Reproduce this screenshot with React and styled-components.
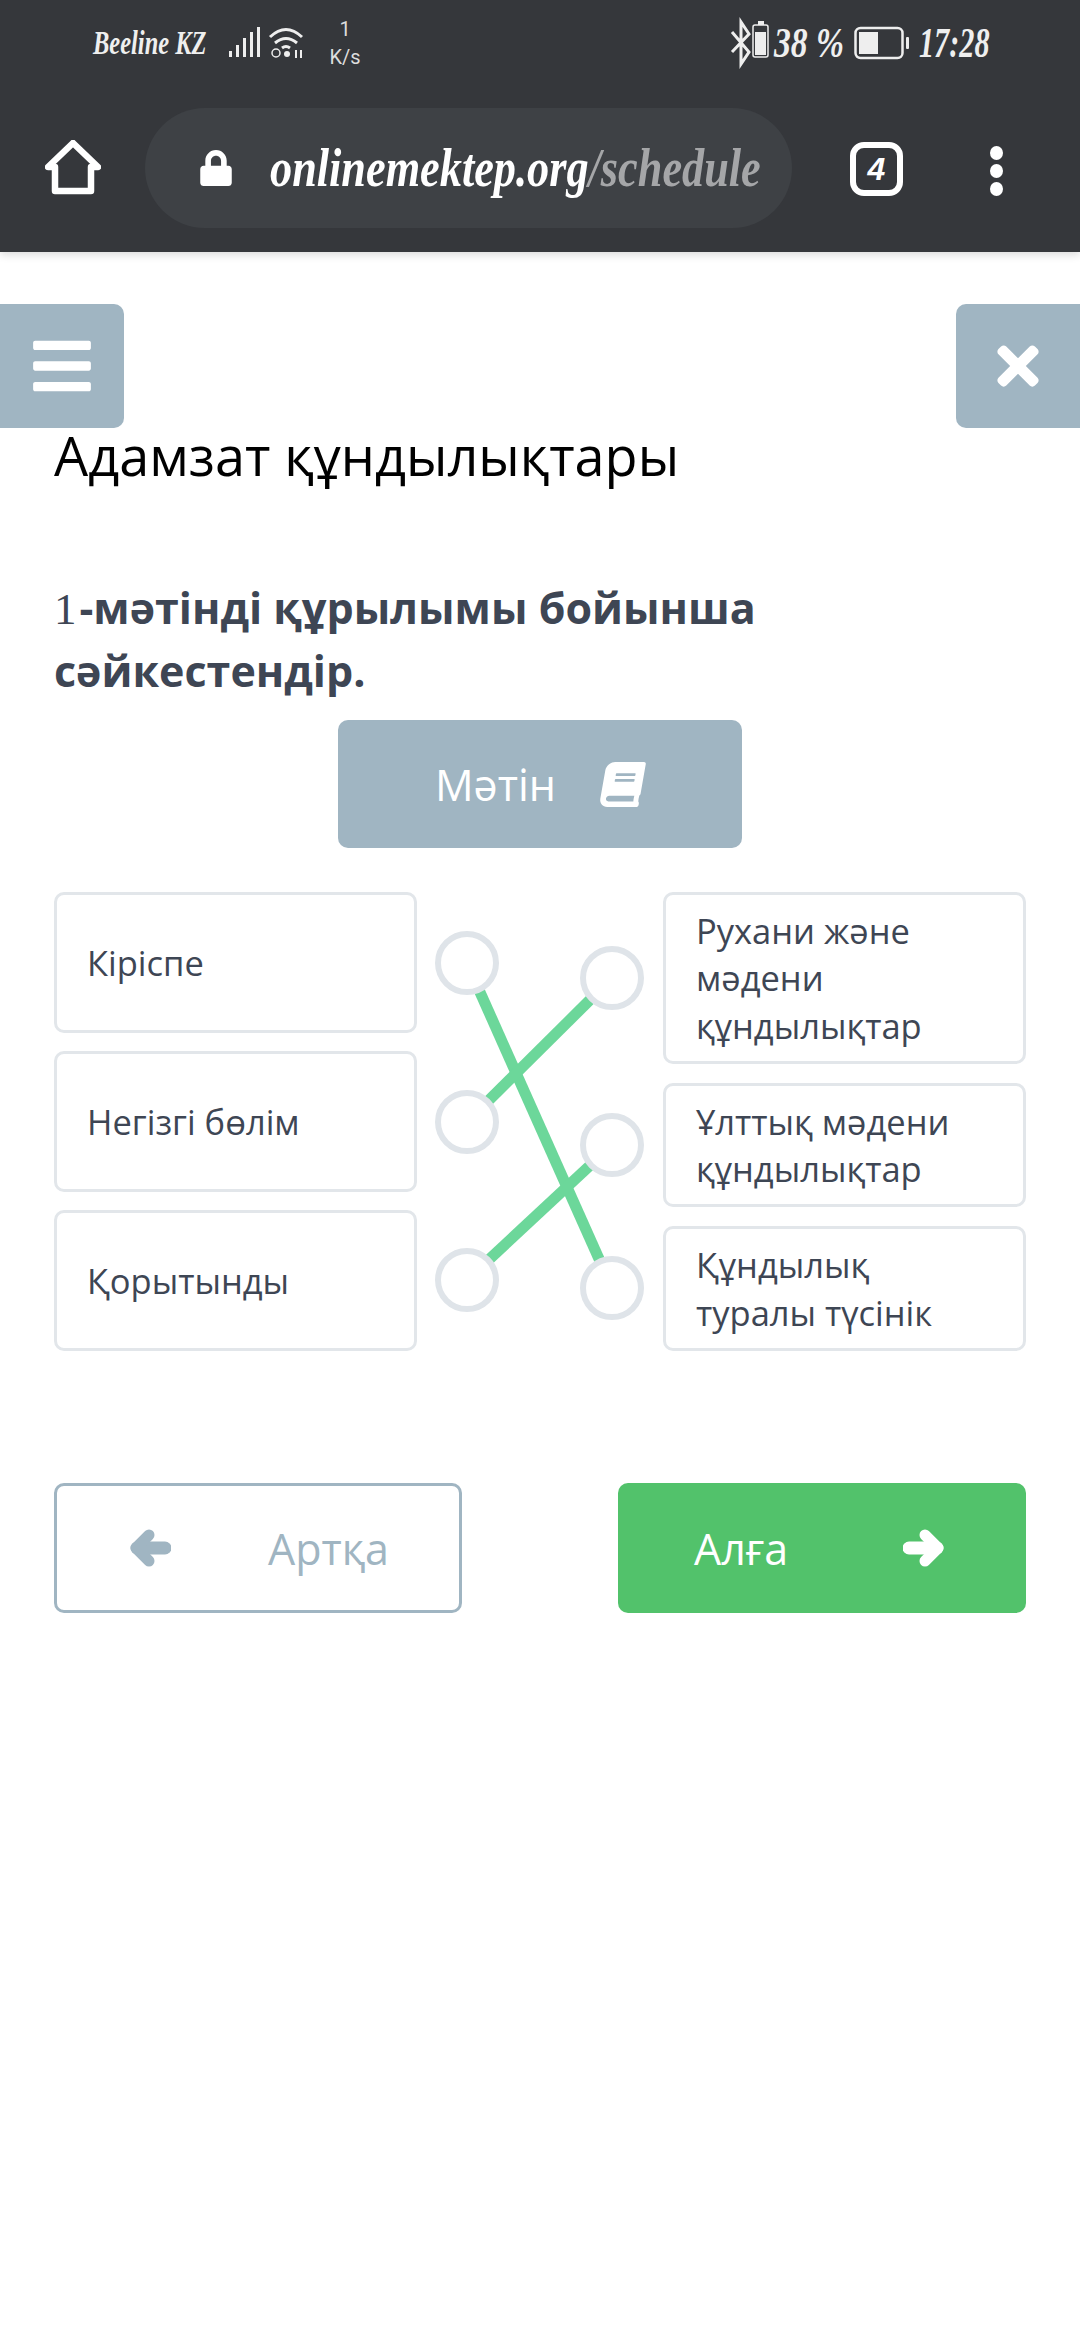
import React from "react";
import styled, { createGlobalStyle } from "styled-components";
import { FaBars, FaTimes, FaBook, FaLock } from "react-icons/fa";

const Global = createGlobalStyle`
  html, body { margin: 0; padding: 0; background: #fff; }
  * { box-sizing: border-box; }
`;
const Page = styled.div`
  width: 1080px; height: 2340px; overflow: hidden; background: #fff;
  font-family: "Open Sans", "Noto Sans", sans-serif; color: #3e4654;
`;
const Chrome = styled.header`
  height: 252px; background: #35373b; display: flex; flex-direction: column;
  box-shadow: 0 3px 8px rgba(0,0,0,.14);
`;
const StatusBar = styled.div`
  height: 108px; padding: 0 0 22px 93px; display: flex; align-items: center; color: #efefef;
`;
const Script = styled.span`
  font-family: "Liberation Serif", serif; font-style: italic; font-weight: 700;
  font-size: ${p => p.$size}px; display: inline-block; white-space: nowrap;
  transform: scaleX(${p => p.$sx}); transform-origin: left center; width: ${p => p.$w}px;
  margin-left: ${p => p.$ml || 0}px;
`;
const Speed = styled.div`
  width: 44px; margin-left: 5px; font: 400 20px/28px Roboto, sans-serif; text-align: center; color: #ddd;
`;
const Spacer = styled.div`width: ${p => p.$w}px; flex: none;`;
const StatusIcons = styled.svg`flex: none; display: block;`;
const UrlRow = styled.div`flex: 1; display: flex; align-items: flex-start;`;
const HomeSlot = styled.div`
  width: 145px; height: 120px; display: flex; align-items: center; justify-content: center;
`;
const UrlPill = styled.div`
  width: 647px; height: 120px; border-radius: 60px; background: #3e4145; display: flex; align-items: center;
  padding-left: 53px; color: #fff; gap: 36px;
`;
const Host = styled.span`
  font-family: "Liberation Serif", serif; font-style: italic; font-weight: 700; font-size: 54px; color: #fff;
  display: inline-block; white-space: nowrap; transform: scaleX(.82); transform-origin: left center; width: 490px;
`;
const Path = styled.span`color: #a5a6a8;`;
const TabSlot = styled.div`
  margin-left: 58px; width: 53px; height: 54px; margin-top: 34px; border: 6px solid #fff; border-radius: 14px;
  display: flex; align-items: center; justify-content: center; color: #fff;
  font: italic 700 32px/1 "Liberation Sans", sans-serif;
`;
const Kebab = styled.div`
  margin-left: 87px; margin-top: 38px; display: flex; flex-direction: column; gap: 4px;
`;
const Dot = styled.i`display: block; width: 13px; height: 14px; border-radius: 50%; background: #fff;`;

const Content = styled.main`padding-top: 52px;`;
const CornerRow = styled.div`display: flex; justify-content: space-between;`;
const CornerBtn = styled.div`
  width: 124px; height: 124px; background: #a0b5c2; color: #fff; display: flex; align-items: center; justify-content: center;
  border-radius: ${p => p.$side === "left" ? "0 10px 10px 0" : "10px 0 0 10px"};
  font-size: ${p => p.$fs}px;
`;
const Title = styled.h1`
  margin: -3px 0 0; padding: 0 54px; font-weight: 400; font-size: 54px; line-height: 60px; color: #000;
`;
const Question = styled.h2`
  margin: 92px 0 0; padding: 0 54px; font-size: 43px; line-height: 61px; font-weight: 700; color: #3e4654; width: 860px;
`;
const One = styled.span`font-family: "Liberation Serif", serif; font-weight: 400; font-size: 45px; margin-right: 3px;`;
const CenterRow = styled.div`display: flex; justify-content: center; margin-top: 19px;`;
const TextBtn = styled.div`
  width: 404px; height: 128px; border-radius: 10px; background: #a0b5c2; color: #fff; display: flex;
  align-items: center; justify-content: center; gap: 44px; font-size: 43px;
  svg { font-size: 45px; transform: skewX(-10deg); }
`;
const Match = styled.section`
  margin-top: 44px; padding: 0 54px; display: grid; grid-template-columns: 363px 246px 363px; align-items: stretch;
`;
const Col = styled.div`display: flex; flex-direction: column; gap: ${p => p.$gap}px;`;
const Card = styled.div`
  height: ${p => p.$h}px; border: 3px solid #e2e6ea; border-radius: 10px; background: #fff;
  display: flex; align-items: center; padding: 0 40px 0 30px; font-size: 34.5px; line-height: 47.5px; color: #3e4654;
`;
const Wires = styled.svg`display: block;`;
const Nav = styled.div`
  margin-top: 132px; padding: 0 54px; display: flex; justify-content: space-between;
`;
const NavBtn = styled.div`
  width: 408px; height: 130px; border-radius: 10px; display: flex; align-items: center; justify-content: space-between;
  font-size: 43px;
  padding: 0 ${p => p.$pr}px 0 ${p => p.$pl}px;
  background: ${p => p.$primary ? "#52c26b" : "#fff"};
  color: ${p => p.$primary ? "#fff" : "#a0b5c2"};
  border: ${p => p.$primary ? "none" : "3.5px solid #a0b5c2"};
`;

const HomeIcon = () => (
  <svg width="56" height="56" viewBox="0 0 56 56" fill="none" stroke="#fff" strokeWidth="6.5" strokeLinejoin="round">
    <path d="M3 27 L28 3 L53 27 H46 V51 H10 V27 Z" />
  </svg>
);

const Arrow = ({ color, flip }) => (
  <svg width="44" height="38" viewBox="0 0 44 38" fill="none" stroke={color} strokeLinecap="round" strokeLinejoin="round"
    style={flip ? { transform: "scaleX(-1)" } : undefined}>
    <path d="M38 19 H10" strokeWidth="13" />
    <path d="M22 6 L9 19 L22 32" strokeWidth="11" />
  </svg>
);

const LeftStatus = () => (
  <StatusIcons width="90" height="36" viewBox="0 0 90 36">
    <g fill="#eee">
      <rect x="1" y="26" width="3" height="6" /><rect x="8" y="20" width="3" height="12" />
      <rect x="15" y="13" width="3" height="19" /><rect x="22" y="7" width="3" height="25" /><rect x="29" y="2" width="3" height="30" />
    </g>
    <g fill="none" stroke="#eee" strokeWidth="3">
      <path d="M42 12 Q58 -3 74 12" /><path d="M47 18 Q58 9 69 18" /><path d="M54 23 Q58 20 62 23" />
      <circle cx="48" cy="28" r="4" strokeWidth="1.5" />
    </g>
    <circle cx="59" cy="29" r="3" fill="#eee" /><path d="M68 25v8M73 33v-8" stroke="#eee" strokeWidth="2" />
  </StatusIcons>
);

const BtIcon = () => (
  <StatusIcons width="42" height="66" viewBox="0 0 42 66" style={{ marginRight: 4 }}>
    <path d="M4 22 L21 42 L13 54 V12 L21 24 L4 42" fill="none" stroke="#eee" strokeWidth="3" />
    <rect x="25" y="15" width="15" height="32" rx="2" fill="none" stroke="#eee" strokeWidth="1.5" />
    <rect x="30" y="11" width="6" height="4" fill="#eee" />
    <rect x="27" y="22" width="11" height="23" fill="#eee" />
  </StatusIcons>
);

const BatteryIcon = () => (
  <StatusIcons width="56" height="34" viewBox="0 0 56 34">
    <rect x="1.5" y="2" width="47" height="30" rx="5" fill="none" stroke="#eee" strokeWidth="2.5" />
    <rect x="5" y="6" width="19" height="22" fill="#eee" />
    <rect x="52" y="11" width="3" height="12" rx="1" fill="#eee" />
  </StatusIcons>
);

const leftY = [71, 230, 388];
const rightY = [86, 253, 396];
const Matching = () => (
  <Wires width="246" height="459" viewBox="0 0 246 459">
    <g stroke="#6cd79a" strokeWidth="11">
      <line x1="50" y1="71" x2="195" y2="396" />
      <line x1="50" y1="230" x2="195" y2="86" />
      <line x1="50" y1="388" x2="195" y2="253" />
    </g>
    <g fill="#fff" stroke="#dfe4e9" strokeWidth="6">
      {leftY.map(y => <circle key={y} cx="50" cy={y} r="29" />)}
      {rightY.map(y => <circle key={y} cx="195" cy={y} r="29" />)}
    </g>
  </Wires>
);

export default function App() {
  return (
    <Page>
      <Global />
      <Chrome>
        <StatusBar>
          <Script $size={34} $sx={.72} $w={135}>Beeline KZ</Script>
          <LeftStatus />
          <Speed>1<br />K/s</Speed>
          <Spacer $w={361} />
          <BtIcon />
          <Script $size={42} $sx={.8} $w={80}>38 %</Script>
          <BatteryIcon />
          <Script $size={42} $sx={.72} $w={80} $ml={9}>17:28</Script>
        </StatusBar>
        <UrlRow>
          <HomeSlot><HomeIcon /></HomeSlot>
          <UrlPill>
            <FaLock size={36} />
            <Host>onlinemektep.org<Path>/schedule</Path></Host>
          </UrlPill>
          <TabSlot>4</TabSlot>
          <Kebab><Dot /><Dot /><Dot /></Kebab>
        </UrlRow>
      </Chrome>
      <Content>
        <CornerRow>
          <CornerBtn $side="left" $fs={66}><FaBars /></CornerBtn>
          <CornerBtn $side="right" $fs={60}><FaTimes /></CornerBtn>
        </CornerRow>
        <Title>Адамзат құндылықтары</Title>
        <Question>
          <One>1</One><span>-мәтінді құрылымы бойынша</span><br /><span>сәйкестендір.</span>
        </Question>
        <CenterRow>
          <TextBtn>Мәтін <FaBook /></TextBtn>
        </CenterRow>
        <Match>
          <Col $gap={18}>
            <Card $h={141}>Кіріспе</Card>
            <Card $h={141}>Негізгі бөлім</Card>
            <Card $h={141}>Қорытынды</Card>
          </Col>
          <Matching />
          <Col $gap={19}>
            <Card $h={172}>Рухани және мәдени құндылықтар</Card>
            <Card $h={124}>Ұлттық мәдени құндылықтар</Card>
            <Card $h={125}>Құндылық туралы түсінік</Card>
          </Col>
        </Match>
        <Nav>
          <NavBtn $pl={70} $pr={70}><Arrow color="#a0b5c2" /><span>Артқа</span></NavBtn>
          <NavBtn $primary $pl={76} $pr={79}><span>Алға</span><Arrow color="#fff" flip /></NavBtn>
        </Nav>
      </Content>
    </Page>
  );
}
